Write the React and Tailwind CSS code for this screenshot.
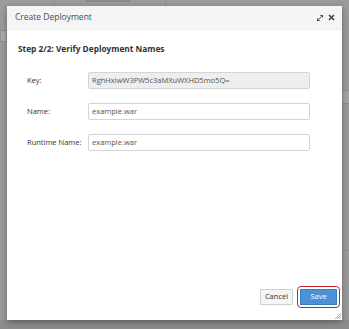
import React from 'react';

const font = { fontFamily: '"Open Sans", "Liberation Sans", sans-serif' };

function Field({ label, value, readOnly }) {
  return (
    <div className="flex items-center h-[17px]">
      <div className="w-[61px] whitespace-nowrap text-[7.5px] text-[#333]">{label}</div>
      <div
        className={
          'w-[222px] h-[17px] border border-[#d4d4d4] rounded-[2px] px-[3px] flex items-center text-[7.5px] text-[#555] ' +
          (readOnly ? 'bg-[#eeeeee]' : 'bg-white')
        }
      >
        {value}
      </div>
    </div>
  );
}

export default function App() {
  return (
    <div className="relative w-[349px] h-[329px] overflow-hidden bg-[#9b9b9b]" style={font}>
      {/* faded page underneath */}
      <div className="absolute left-[86px] top-0 w-[44px] h-[2px] bg-[#8a8a8a]" />
      <div className="absolute left-[54px] top-0 h-[6px] border-l border-[#8e8e8e]" />
      <div className="absolute left-[165px] top-0 h-[6px] border-l border-[#8e8e8e]" />
      <div className="absolute left-0 top-[30px] w-[7px] h-[12px] bg-[#a6acb0] border border-[#8a9096]" />
      <div className="absolute right-0 top-[90px] w-[7px] h-[14px] bg-[#a3a3a3] border-y border-[#8e8e8e]" />
      <div className="absolute right-0 top-[250px] w-[7px] border-t border-[#909090]" />
      <div className="absolute left-0 top-[320px] w-[349px] h-[9px] bg-[#8c8c8c]" />

      <div className="relative pt-[6px] pl-[7px]">
        <div className="w-[335px] h-[314px] bg-white flex flex-col shadow-[0_2px_6px_rgba(0,0,0,0.35)]">
          <div className="h-[24px] bg-[#f5f5f5] border-b border-[#ececec] flex items-center justify-between pl-[8px] pr-[7px]">
            <span className="text-[8.5px] text-[#4d4d4d]">Create Deployment</span>
            <div className="flex items-center gap-[5px] text-[#444]">
              <svg width="6" height="6" viewBox="0 0 6 6">
                <path d="M3.5 0h2.5v2.5z M0 6v-2.5l2.5 2.5z M4.5 1.5L1.5 4.5" stroke="#444" strokeWidth="0.9" fill="#444" />
              </svg>
              <svg width="7" height="7" viewBox="0 0 7 7">
                <path d="M1 1l5 5M6 1l-5 5" stroke="#444" strokeWidth="1.6" />
              </svg>
            </div>
          </div>

          <div className="flex-1 flex flex-col px-[11px]">
            <div className="mt-[13px] text-[8.3px] font-bold text-[#333]">Step 2/2: Verify Deployment Names</div>
            <div className="mt-[17px] pl-[9px] flex flex-col gap-[14px]">
              <Field label="Key:" value="RghHxlwW3PW5c3aMXuWXHD5mo5Q=" readOnly />
              <Field label="Name:" value="example.war" />
              <Field label="Runtime Name:" value="example.war" />
            </div>

            <div className="mt-auto mb-[5px] flex justify-end items-center gap-[4px] mr-[-9px]">
              <div className="h-[16px] w-[33px] flex items-center justify-center bg-[#f5f5f5] border border-[#cfcfcf] rounded-[1px] text-[7.5px] text-[#333]">
                Cancel
              </div>
              <div className="p-[2px] border-[1.5px] border-[#c8202b] rounded-[4px]">
                <div className="h-[16px] w-[37px] flex items-center justify-center bg-[#4a92d6] border border-[#3b7fc0] text-[7.5px] text-white">
                  Save
                </div>
              </div>
            </div>
          </div>
          <div className="flex justify-end pr-[1px] pb-[1px]">
            <svg width="6" height="6" viewBox="0 0 6 6">
              <path d="M6 0L0 6M6 2L2 6M6 4L4 6" stroke="#999" strokeWidth="0.8" />
            </svg>
          </div>
        </div>
      </div>
    </div>
  );
}
